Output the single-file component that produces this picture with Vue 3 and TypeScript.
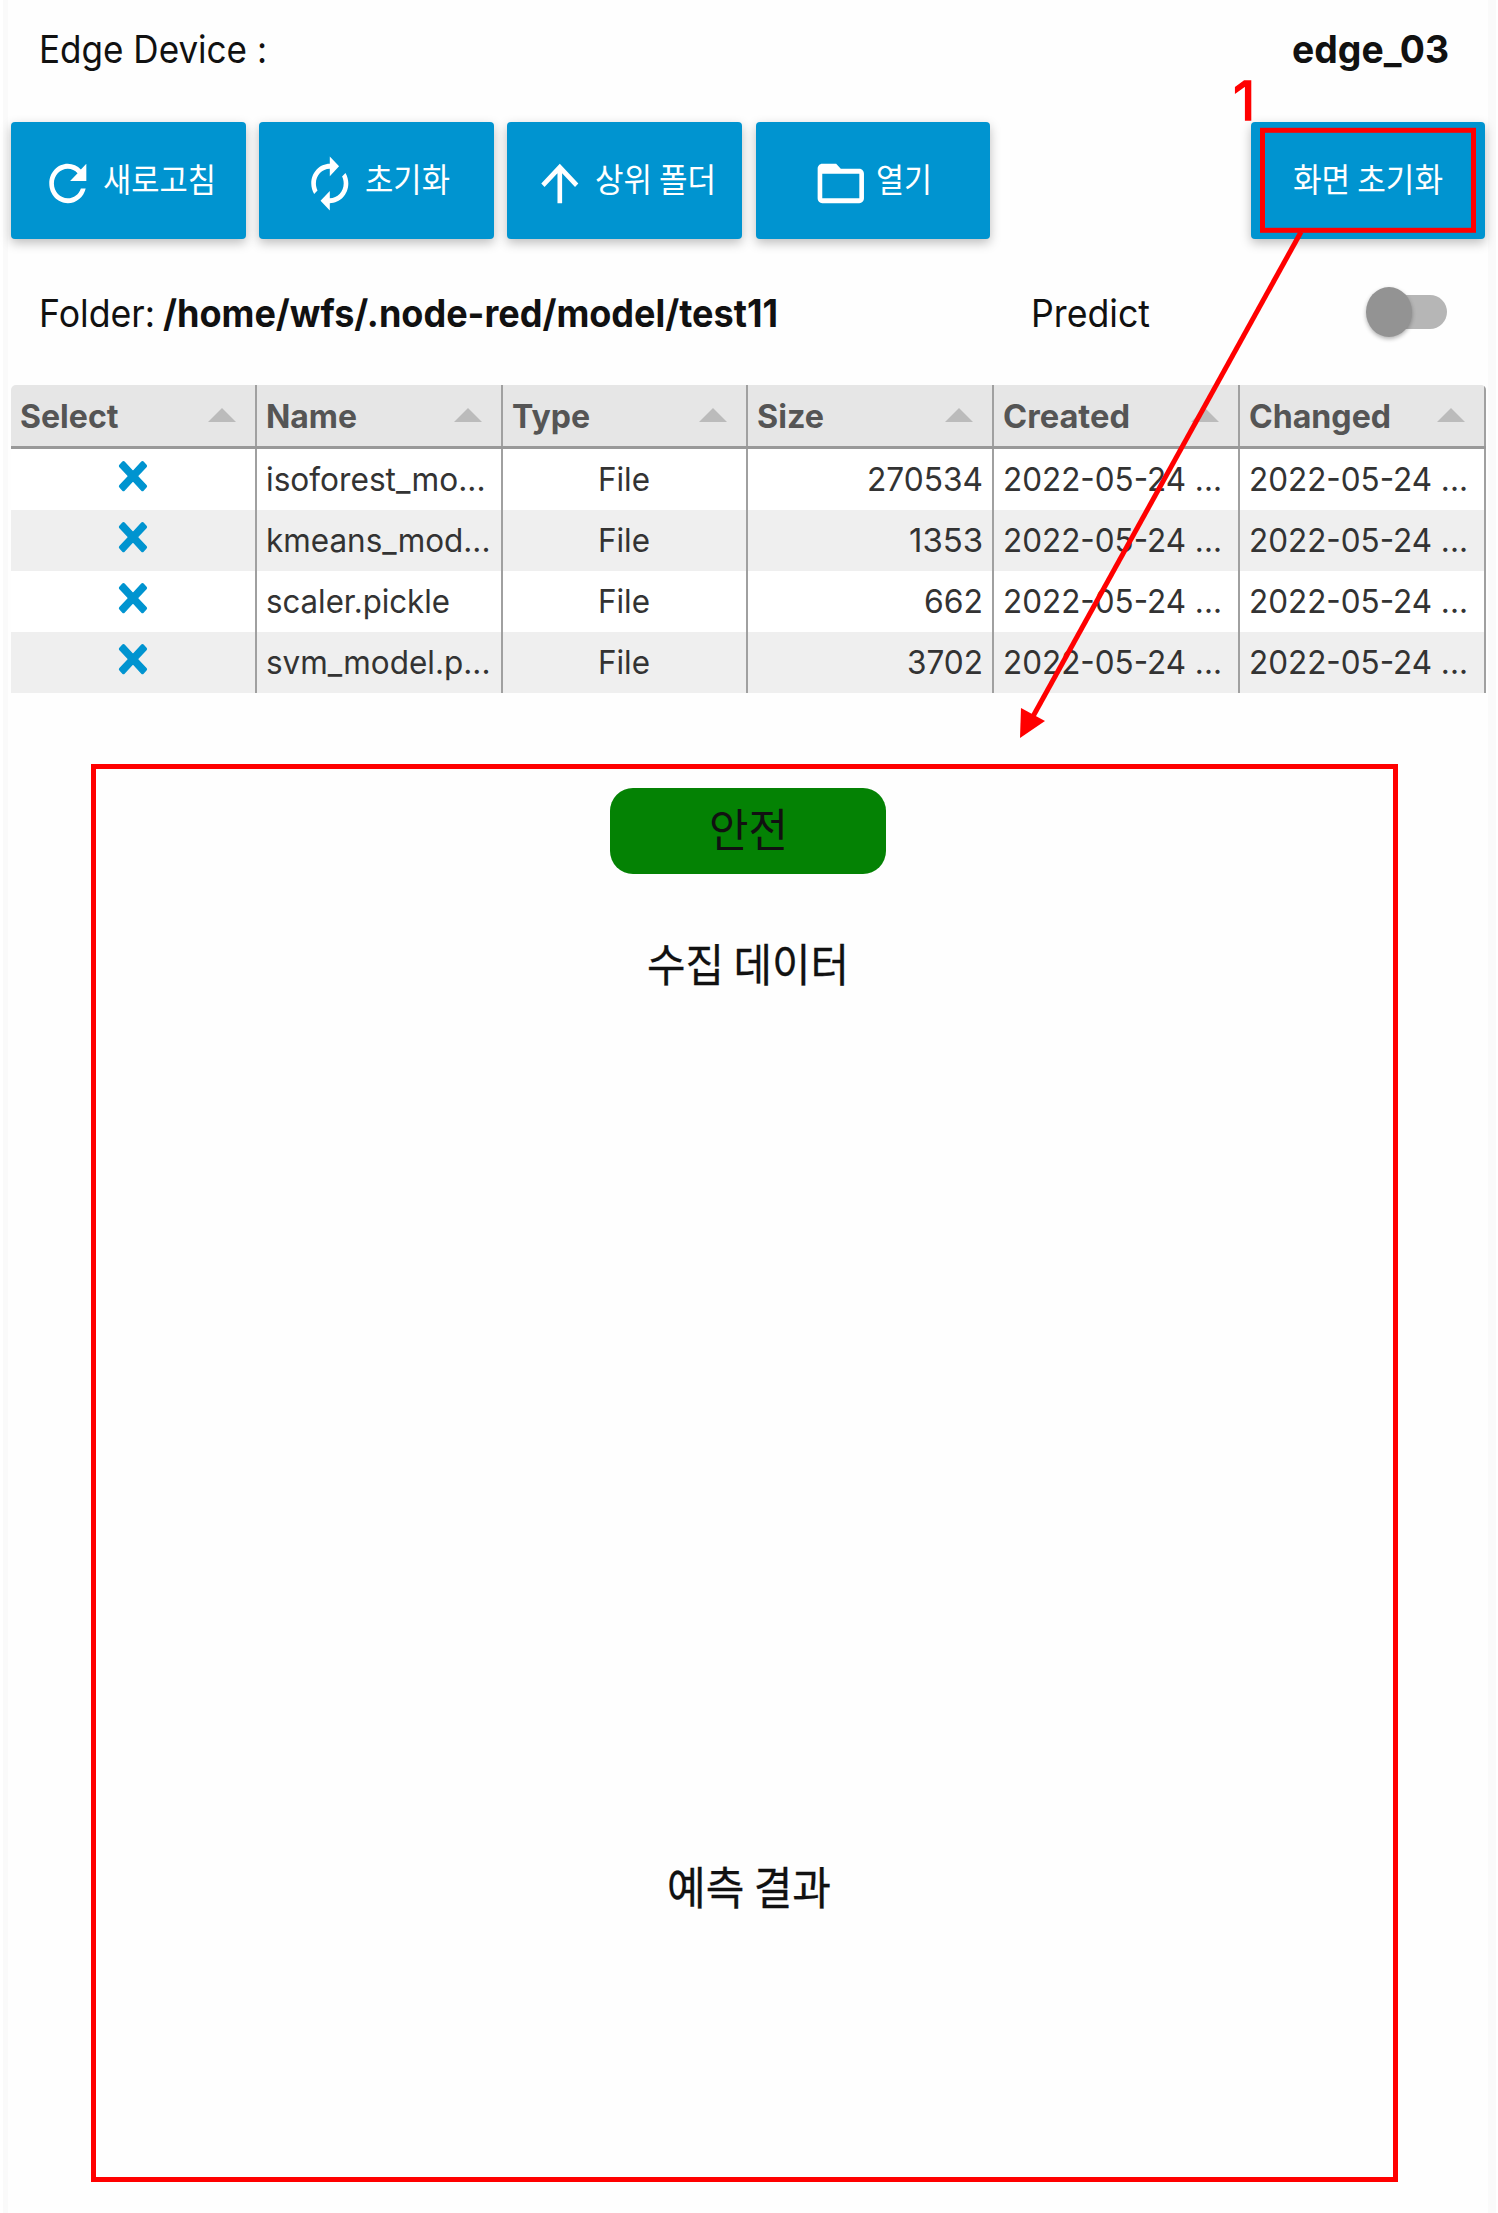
<script setup lang="ts">
interface Column { title: string; w: number; align: 'left' | 'center' | 'right' }
interface Cell { text: string; w: number }

// Condenses a label horizontally so that it occupies exactly the given width.
const vFit = {
  mounted(el: HTMLElement, binding: { value: number }) {
    const natural = el.getBoundingClientRect().width
    el.style.transform = `scaleX(${binding.value / natural})`
    el.style.marginRight = `${binding.value - natural}px`
  },
}

const actions: { label: string; w: number; pad: number; icon: string }[] = [
  { label: '새로고침', w: 113, pad: 28.5, icon: 'M17.65 6.35C16.2 4.9 14.21 4 12 4c-4.42 0-7.99 3.58-7.99 8s3.57 8 7.99 8c3.73 0 6.84-2.55 7.73-6h-2.08c-.82 2.33-3.04 4-5.65 4-3.31 0-6-2.69-6-6s2.69-6 6-6c1.66 0 3.14.69 4.22 1.78L13 11h7V4l-2.35 2.35z' },
  { label: '초기화', w: 85, pad: 42.5, icon: 'M12 6v3l4-4-4-4v3c-4.42 0-8 3.58-8 8 0 1.57.46 3.03 1.24 4.26L6.7 14.8c-.45-.83-.7-1.79-.7-2.8 0-3.31 2.69-6 6-6zm6.76 1.74L17.3 9.2c.44.84.7 1.79.7 2.8 0 3.31-2.69 6-6 6v-3l-4 4 4 4v-3c4.42 0 8-3.58 8-8 0-1.57-.46-3.03-1.24-4.26z' },
  { label: '상위 폴더', w: 121, pad: 24.5, icon: 'M4 12l1.41 1.41L11 7.83V20h2V7.83l5.58 5.59L20 12l-8-8-8 8z' },
  { label: '열기', w: 56, pad: 57, icon: 'M20 6h-8l-2-2H4c-1.1 0-1.99.9-1.99 2L2 18c0 1.1.9 2 2 2h16c1.1 0 2-.9 2-2V8c0-1.1-.9-2-2-2zm0 12H4V8h16v10z' },
]

const columns: Column[] = [
  { title: 'Select', w: 98.5, align: 'center' },
  { title: 'Name', w: 91, align: 'left' },
  { title: 'Type', w: 78, align: 'center' },
  { title: 'Size', w: 67, align: 'right' },
  { title: 'Created', w: 127, align: 'left' },
  { title: 'Changed', w: 142, align: 'left' },
]

const stamp: Cell = { text: '2022-05-24 ...', w: 219 }
const file: Cell = { text: 'File', w: 52 }
const rows: Cell[][] = [
  [{ text: 'isoforest_mo...', w: 219.5 }, file, { text: '270534', w: 116 }, stamp, stamp],
  [{ text: 'kmeans_mod...', w: 224.5 }, file, { text: '1353', w: 74 }, stamp, stamp],
  [{ text: 'scaler.pickle', w: 184 }, file, { text: '662', w: 59 }, stamp, stamp],
  [{ text: 'svm_model.p...', w: 224.5 }, file, { text: '3702', w: 76 }, stamp, stamp],
]
const cross = 'M22.245,4.015c0.313,0.313,0.313,0.826,0,1.139l-6.276,6.27c-0.313,0.312-0.313,0.826,0,1.14l6.273,6.272c0.313,0.313,0.313,0.826,0,1.14l-2.285,2.277c-0.314,0.312-0.828,0.312-1.142,0l-6.271-6.271c-0.313-0.313-0.828-0.313-1.141,0l-6.276,6.267c-0.313,0.313-0.828,0.313-1.141,0l-2.282-2.28c-0.313-0.313-0.313-0.826,0-1.14l6.278-6.269c0.313-0.312,0.313-0.826,0-1.14L1.709,5.147c-0.314-0.313-0.314-0.827,0-1.14l2.284-2.278C4.308,1.417,4.821,1.417,5.135,1.73L11.405,8c0.314,0.314,0.828,0.314,1.141,0.001l6.276-6.267c0.312-0.312,0.826-0.312,1.141,0L22.245,4.015z'
</script>

<template>
  <div class="page">
    <main class="panel">
      <header class="device">
        <span v-fit="228" class="fit">Edge Device :</span>
        <b v-fit="157" class="fit">edge_03</b>
      </header>

      <nav class="actions">
        <button v-for="a in actions" :key="a.label" class="btn" :style="{ paddingLeft: a.pad + 'px' }">
          <svg class="icon" viewBox="0 0 24 24" preserveAspectRatio="none"><path :d="a.icon" fill="#fff" /></svg>
          <span v-fit="a.w" class="fit ko">{{ a.label }}</span>
        </button>
        <button class="btn reset"><span v-fit="150" class="fit ko">화면 초기화</span></button>
      </nav>

      <section class="folder">
        <span v-fit="116" class="fit">Folder:</span>
        <b v-fit="615" class="fit path">/home/wfs/.node-red/model/test11</b>
        <span v-fit="119" class="fit predict">Predict</span>
        <span class="toggle"><i class="track"></i><i class="knob"></i></span>
      </section>

      <section class="table">
        <div class="row head">
          <div v-for="c in columns" :key="c.title" class="cell">
            <span v-fit="c.w" class="fit">{{ c.title }}</span>
            <i class="sort"></i>
          </div>
        </div>
        <div v-for="(r, i) in rows" :key="i" class="row body">
          <div class="cell center">
            <svg class="cross" viewBox="-0.5 -0.5 25 25" preserveAspectRatio="none"><path :d="cross" fill="#0094d0" stroke="#0094d0" stroke-width="1" /></svg>
          </div>
          <div v-for="(c, j) in r" :key="j" class="cell" :class="columns[j + 1].align">
            <span v-fit="c.w" class="fit">{{ c.text }}</span>
          </div>
        </div>
      </section>

      <section class="result">
        <div class="status"><span v-fit="79" class="fit ko">안전</span></div>
        <h2 class="title collected"><span v-fit="202" class="fit ko">수집 데이터</span></h2>
        <h2 class="title predicted"><span v-fit="164" class="fit ko">예측 결과</span></h2>
      </section>
    </main>

    <svg class="notes" width="1498" height="2213" viewBox="0 0 1498 2213">
      <rect x="1262.5" y="130.3" width="211" height="100" fill="none" stroke="#f00" stroke-width="5" />
      <path d="M1301 232L1031 720" stroke="#f00" stroke-width="5" fill="none" />
      <path d="M1020 738L1021 708L1045 721Z" fill="#f00" />
      <text x="1233" y="119.5" font-size="54" fill="#f00" stroke="#f00" stroke-width="1.3" textLength="22.5" lengthAdjust="spacingAndGlyphs">1</text>
    </svg>
  </div>
</template>

<style>
body { margin: 0; background: #fff; }
</style>

<style scoped>
.page {
  position: relative;
  width: 1498px;
  height: 2213px;
  box-sizing: border-box;
  padding: 0 2px 0 3px;
  background: #fff;
  font-family: Inter, "Noto Sans CJK KR", sans-serif;
  color: #111;
  overflow: hidden;
}
.panel {
  height: 2213px;
  box-sizing: border-box;
  padding: 0 3px 0 3px;
  border: solid #fafafa;
  border-width: 0 8px 0 5px;
  background: #fefefe;
}
.fit { display: inline-block; white-space: pre; transform-origin: 0 50%; flex: none; }
.ko { font-family: "Noto Sans CJK KR", sans-serif; }
.device {
  display: flex;
  justify-content: space-between;
  height: 98px;
  line-height: 100px;
  padding: 0 36.5px 0 27.5px;
  font-size: 37.6px;
}
b { font-weight: 700; }
.actions { display: flex; gap: 13.7px; margin-top: 23.5px; }
.btn {
  display: flex;
  align-items: center;
  gap: 8px;
  width: 234.5px;
  height: 117.5px;
  box-sizing: border-box;
  padding: 0;
  border: 0;
  border-radius: 4px;
  background: #0094d0;
  box-shadow: 0 4px 11px rgba(0, 0, 0, .26);
  color: #fff;
  font-size: 33px;
  line-height: 48px;
}
.btn .ko { margin-top: -4px; }
.icon { width: 55.6px; height: 59px; margin-top: 7px; flex: none; }
.reset { margin-left: auto; justify-content: center; }
.folder {
  display: flex;
  align-items: center;
  height: 146px;
  padding-left: 27.5px;
  font-size: 37.6px;
}
.folder .fit { margin-top: 2.5px; }
.path { margin-left: 8px; }
.predict { margin-left: auto; }
.toggle { position: relative; width: 81px; height: 50px; margin: 0 38px 0 216px; flex: none; }
.track { position: absolute; left: 10px; right: 0; top: 8px; height: 34px; border-radius: 17px; background: #b6b6b6; }
.knob { position: absolute; left: 0; top: 0; width: 46px; height: 50px; border-radius: 50%; background: #939393; box-shadow: 0 2px 4px rgba(0, 0, 0, .3); }
.table { border-radius: 5px 5px 0 0; overflow: hidden; font-size: 32.6px; color: #333; width: 1474.5px; background: #fff; }
.row { display: flex; height: 61px; }
.head { background: #e6e6e6; border-bottom: 3px solid #999; color: #555; font-weight: 700; }
.body:nth-child(odd) { background: #efefef; }
.body .fit { margin-top: -1.5px; }
.cell {
  display: flex;
  align-items: center;
  flex: 1 1 0;
  box-sizing: border-box;
  min-width: 0;
  padding: 0 9px;
  border-right: 2.4px solid #a0a0a0;
}
.head .cell { justify-content: space-between; padding-right: 19px; }
.center { justify-content: center; }
.right { justify-content: flex-end; }
.sort { border: solid transparent; border-width: 0 14px 14.5px; border-bottom-color: #bbb; margin-top: -2px; }
.cross { width: 32px; height: 34.3px; margin-top: -7.5px; }
.result { display: flex; flex-direction: column; align-items: center; padding-top: 95px; }
.status {
  width: 276px;
  height: 86px;
  border-radius: 23px;
  background: #048204;
  text-align: center;
  font-size: 45px;
  line-height: 80px;
}
.title { margin: 0; height: 60px; line-height: 60px; font-size: 45px; font-weight: 400; -webkit-text-stroke: .3px #111; }
.collected { margin-top: 59px; }
.predicted { margin-top: 863px; padding-left: 1px; }
.notes { position: absolute; left: 0; top: 0; }
.page::after {
  content: "";
  position: absolute;
  left: 91px;
  top: 763.5px;
  width: 1297px;
  height: 1408px;
  border: 5px solid #f00;
}
</style>
